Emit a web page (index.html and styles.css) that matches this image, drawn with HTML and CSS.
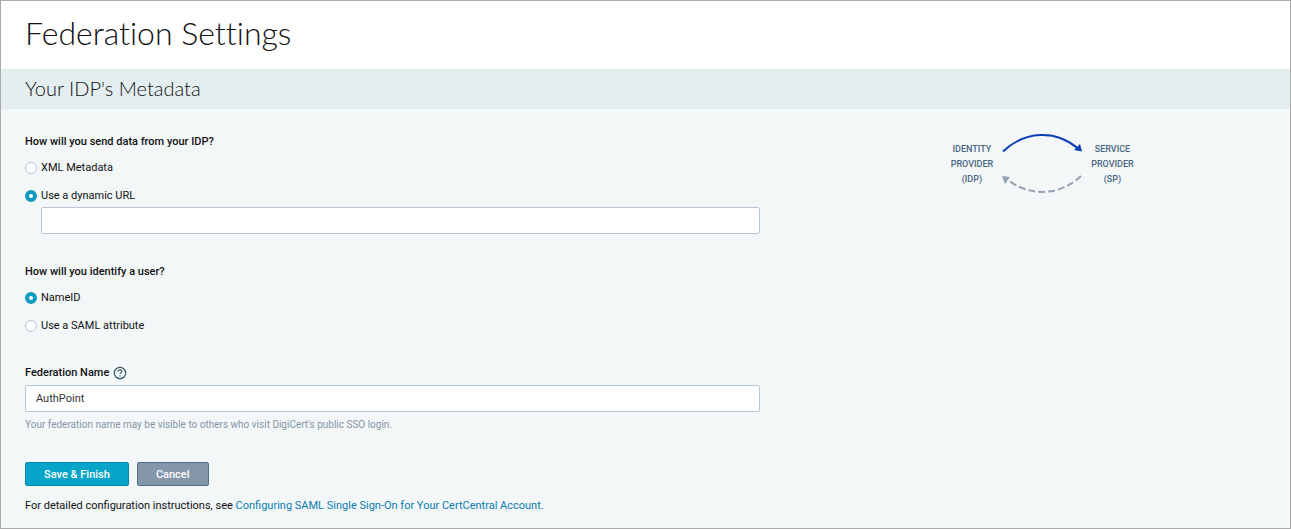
FILE: index.html
```html
<!DOCTYPE html>
<html lang="en">
<head>
    <meta charset="UTF-8">
    <meta name="viewport" content="width=device-width, initial-scale=1.0">
    <title>Federation Settings</title>
    <link rel="stylesheet" href="styles.css">
</head>
<body>

<header class="page-header">
    <h1>Federation Settings</h1>
</header>
<h2 class="section-title">Your IDP's Metadata</h2>

<main class="content">
    <form class="settings">
        <fieldset class="group">
            <legend>How will you send data from your IDP?</legend>
            <label class="option"><input type="radio" name="source" value="xml">XML Metadata</label>
            <label class="option"><input type="radio" name="source" value="url" checked>Use a dynamic URL</label>
            <input class="text url" type="text" aria-label="Dynamic URL">
        </fieldset>

        <fieldset class="group">
            <legend>How will you identify a user?</legend>
            <label class="option"><input type="radio" name="identify" value="nameid" checked>NameID</label>
            <label class="option"><input type="radio" name="identify" value="saml">Use a SAML attribute</label>
        </fieldset>

        <div class="name-label">
            <label for="federation-name">Federation Name</label>
            <svg class="help" viewBox="0 0 14 14" width="14" height="14" aria-hidden="true">
                <circle cx="7" cy="7" r="5.7"/>
                <path d="M5.1 5.6C5.1 4.4 5.9 3.8 7 3.8S8.9 4.5 8.9 5.4C8.9 6.6 7 6.7 7 8.1M7 9.3V10.4"/>
            </svg>
        </div>
        <input class="text" type="text" id="federation-name" value="AuthPoint">
        <p class="hint">Your federation name may be visible to others who visit DigiCert's public SSO login.</p>

        <div class="buttons">
            <button type="button" class="save">Save &amp; Finish</button>
            <button type="button" class="cancel">Cancel</button>
        </div>
        <p class="more">For detailed configuration instructions, see <a href="#">Configuring SAML Single Sign-On for Your CertCentral Account.</a></p>
    </form>

    <div class="diagram">
        <div class="party">IDENTITY<br>PROVIDER<br>(IDP)</div>
        <svg class="arrows" viewBox="0 0 82 62" width="82" height="62" aria-hidden="true">
            <path class="to" d="M2 17.500C24 -3.500 55 -4.500 77 14.500"/>
            <path class="to-head" d="M81 17.500L73 16L79 10Z"/>
            <path class="back" d="M80 42C59 62 29 63 7 46"/>
            <path class="back-head" d="M1 42L9 43L4 50Z"/>
        </svg>
        <div class="party">SERVICE<br>PROVIDER<br>(SP)</div>
    </div>
</main>

</body>
</html>
```

FILE: styles.css
```css
* { box-sizing: border-box; }
body { min-height: 100vh; margin: 0; border: 1px solid #aaa; background-color: #f3f7f8; color: #111; font-family: Roboto, sans-serif; font-size: 11px; line-height: 16px; }
h1, h2, p { margin: 0; }
.page-header { padding: 12px 24px 16px; background-color: #fff; }
h1, h2 { font-family: Lato, sans-serif; font-weight: 300; font-variant-ligatures: none; }
h1 { font-size: 32px; line-height: 40px; }
.section-title { padding: 7px 24px 9px; background-color: #e4edf0; font-size: 20px; line-height: 24px; }
.content { display: grid; grid-template-columns: 59.2% auto; column-gap: 191px; justify-content: start; padding: 25px 24px 12px; }

.group { margin: 0 0 30px; padding: 0; border: 0; }
.group + .group { margin-bottom: 19px; }
legend { margin-bottom: 10px; padding: 0; font-weight: 500; }
.option { display: flex; align-items: center; gap: 4px; margin-bottom: 12px; }
.option input { appearance: none; width: 12px; height: 12px; margin: 0; border: 1px solid #b9c6d6; border-radius: 50%; background-color: #fff; }
.option input:checked { border: 4px solid #0f9bbd; }
.text { display: block; width: 100%; height: 27px; padding: 0 10px; border: 1px solid #b9c6d6; border-radius: 2px; background-color: #fff; color: #333; font-family: inherit; font-size: 11px; }
.url { width: calc(100% - 16px); margin: -9px 0 0 16px; }
.name-label { display: flex; align-items: center; gap: 4px; margin-bottom: 4px; font-weight: 500; }
.help { fill: none; stroke: #33566b; stroke-width: 1.2; }
.hint { margin-top: 5px; color: #8496a5; font-size: 10px; }

.buttons { display: flex; gap: 8px; margin: 29px 0 12px; }
button { height: 24px; padding: 0 18px; border: 1px solid; border-radius: 2px; color: #fff; font-family: inherit; font-size: 11px; font-weight: 500; cursor: pointer; }
.save { border-color: #0788ae; background-color: #06a4c8; }
.cancel { border-color: #53708f; background-color: #8496a9; }
a { color: #0a7cae; text-decoration: none; }

.diagram { display: flex; align-items: flex-start; gap: 8px; }
.party { padding-top: 8px; color: #4a6784; font-size: 9px; font-weight: 500; line-height: 15px; text-align: center; }
.arrows { overflow: visible; fill: none; stroke-width: 2; }
.to { stroke: #0c3eb5; }
.to-head { fill: #0c3eb5; }
.back { stroke: #93a3b5; stroke-dasharray: 7 3; }
.back-head { fill: #93a3b5; }
```
